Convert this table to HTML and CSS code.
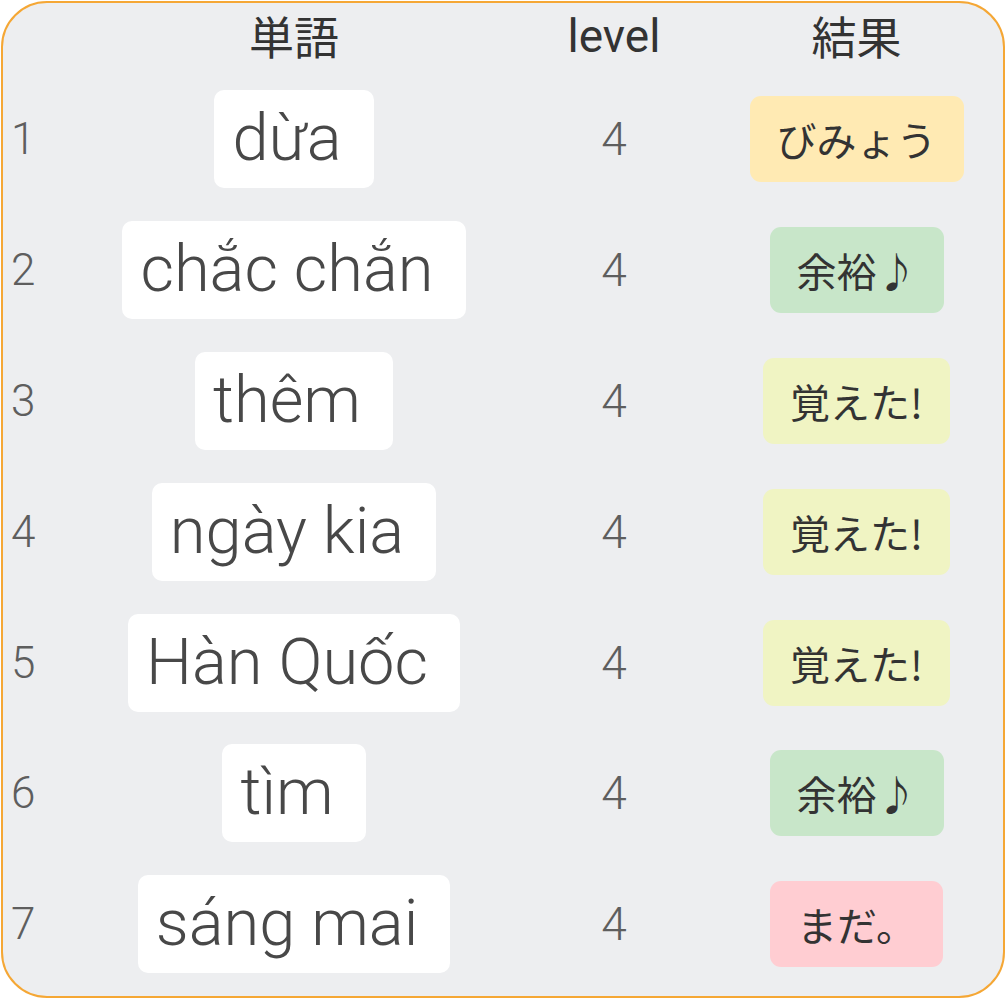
FILE: index.html
```html
<!DOCTYPE html>
<html lang="ja">
<head>
<meta charset="utf-8">
<link rel="stylesheet" href="styles.css">
</head>
<body>
<div class="card">
  <div class="table">
    <div class="row head">
      <div class="c-num"></div>
      <div class="c-word"><span class="h-jp">単語</span></div>
      <div class="c-level"><span class="h-en">level</span></div>
      <div class="c-res"><span class="h-jp">結果</span></div>
    </div>
    <div class="row">
      <div class="c-num">1</div>
      <div class="c-word"><span class="word">dừa</span></div>
      <div class="c-level">4</div>
      <div class="c-res"><span class="badge b-amber">びみょう</span></div>
    </div>
    <div class="row">
      <div class="c-num">2</div>
      <div class="c-word"><span class="word">chắc chắn</span></div>
      <div class="c-level">4</div>
      <div class="c-res"><span class="badge b-green">余裕♪</span></div>
    </div>
    <div class="row">
      <div class="c-num">3</div>
      <div class="c-word"><span class="word">thêm</span></div>
      <div class="c-level">4</div>
      <div class="c-res"><span class="badge b-lime">覚えた!</span></div>
    </div>
    <div class="row">
      <div class="c-num">4</div>
      <div class="c-word"><span class="word">ngày kia</span></div>
      <div class="c-level">4</div>
      <div class="c-res"><span class="badge b-lime">覚えた!</span></div>
    </div>
    <div class="row">
      <div class="c-num">5</div>
      <div class="c-word"><span class="word">Hàn Quốc</span></div>
      <div class="c-level">4</div>
      <div class="c-res"><span class="badge b-lime">覚えた!</span></div>
    </div>
    <div class="row">
      <div class="c-num">6</div>
      <div class="c-word"><span class="word">tìm</span></div>
      <div class="c-level">4</div>
      <div class="c-res"><span class="badge b-green">余裕♪</span></div>
    </div>
    <div class="row">
      <div class="c-num">7</div>
      <div class="c-word"><span class="word">sáng mai</span></div>
      <div class="c-level">4</div>
      <div class="c-res"><span class="badge b-red">まだ。</span></div>
    </div>
  </div>
</div>
</body>
</html>
```

FILE: styles.css
```css
html, body {
  margin: 0;
  padding: 0;
  background: #ffffff;
}

body {
  font-family: Roboto, "Noto Sans CJK JP", sans-serif;
}

.card {
  box-sizing: border-box;
  width: 1004px;
  height: 997px;
  margin: 1px 0 0 1px;
  border: 2px solid #f5a735;
  border-radius: 46px;
  background: #edeef0;
  overflow: hidden;
}

.table {
  display: flex;
  flex-direction: column;
}

.row {
  display: grid;
  grid-template-columns: 69px 444px 196px 289px;
  align-items: center;
  height: 130.8px;
}

.row.head {
  box-sizing: border-box;
  height: 71px;
  padding-bottom: 10px;
}

.c-num {
  padding-left: 8px;
  font-size: 44px;
  font-weight: 300;
  color: #5e5e5e;
}

.c-word,
.c-level,
.c-res {
  display: flex;
  justify-content: center;
  align-items: center;
}

.c-level {
  font-size: 46px;
  font-weight: 300;
  color: #5e5e5e;
}

.h-jp {
  font-family: "Noto Sans CJK JP", sans-serif;
  font-size: 45px;
  font-weight: 400;
  color: #333333;
}

.h-en {
  font-family: Roboto, sans-serif;
  font-size: 46px;
  font-weight: 400;
  color: #333333;
}

.word {
  display: inline-block;
  background: #ffffff;
  border-radius: 10px;
  padding: 11px 32px 12px 18px;
  font-family: Roboto, sans-serif;
  font-size: 65px;
  font-weight: 300;
  line-height: 75px;
  color: #484848;
  white-space: nowrap;
}

.badge {
  display: inline-block;
  border-radius: 11px;
  padding: 14px 27px;
  font-family: "Noto Sans CJK JP", sans-serif;
  font-size: 40px;
  line-height: 58px;
  color: #333333;
  white-space: nowrap;
}

.b-amber { background: #ffeab3; }
.b-green { background: #c8e6c9; }
.b-lime  { background: #f0f4c3; }
.b-red   { background: #ffcdd2; }
```
